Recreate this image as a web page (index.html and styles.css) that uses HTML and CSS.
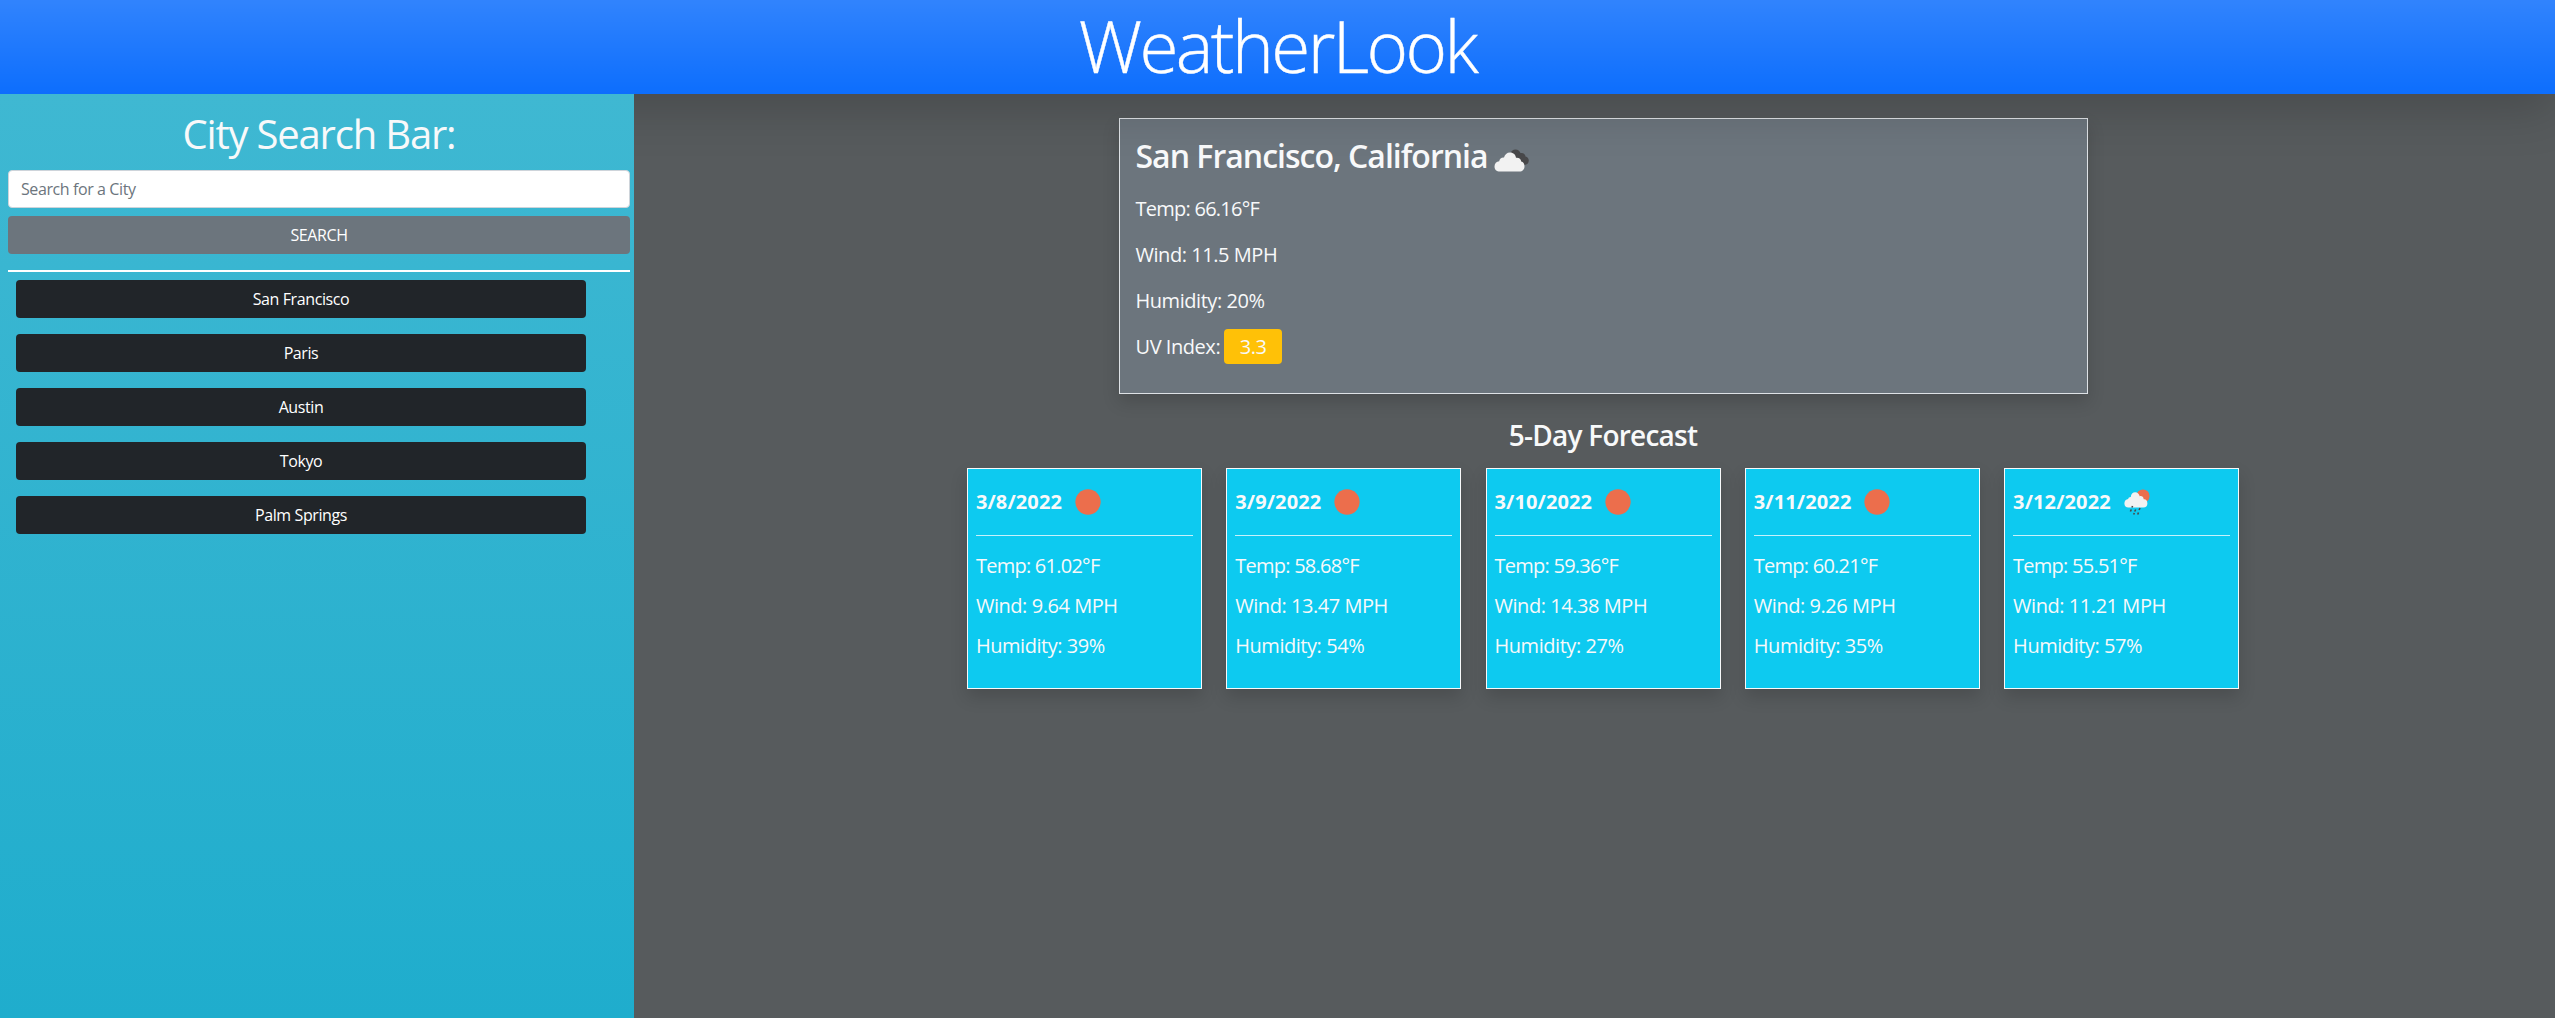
FILE: index.html
```
<!DOCTYPE html>
<html lang="en">
<head>
<meta charset="utf-8">
<title>WeatherLook</title>
<link rel="stylesheet" href="styles.css">
</head>
<body>
<svg class="defs" width="0" height="0" aria-hidden="true">
  <symbol id="sun" viewBox="0 0 26 26"><circle cx="13" cy="13" r="12.7" fill="#ec6e4c"/></symbol>
  <symbol id="clouds" viewBox="0 0 36 23">
    <path d="M16 5C17 2 19 .5 21.500 .5c2.500 0 4.300 1.500 5 3.600 3-.4 4.800 1.200 5 3.500 2.200.5 3.300 2.200 3.300 4 0 2.500-1.800 4.400-4.300 4.400H22Z" fill="#48484a"/>
    <path d="M6 22.500C2.500 22.500.5 20.500.5 17.500c0-3 2-5 4.700-5.200C5.500 10 7.500 8.200 10 8.500 10.700 5.500 13 3.500 16 3.500c3.500 0 5.700 2.300 6 5.200 3-.4 5 1.300 5.200 3.800 2 .4 3.300 2.200 3.300 4.700 0 3.200-2 5.300-5 5.300Z" fill="#f2f2f2"/>
  </symbol>
  <symbol id="rain" viewBox="0 0 26 26">
    <circle cx="19" cy="7" r="6.600" fill="#ec6e4c"/>
    <path d="M4.500 18.500C2 18.500.4 16.800.4 14.400c0-2.500 1.600-4.200 3.800-4.400.3-1.300 1.300-2 2.600-1.900C6.900 5 8.800 3.200 11.200 3.200c2.400 0 4 1.700 4.500 4 2.300-.4 3.700.8 4 3 1.900-.3 3.700.9 3.700 4.200 0 2.500-1.500 4.100-4 4.100Z" fill="#f2f2f2"/>
    <path d="m8.600 17-.7 1.500M7.300 20.500l-.9 2M11.700 20.500l-1 2M16 19l-.9 2M10.300 24l-.6 1.500M14.500 23.500l-.8 2" stroke="#48484a" stroke-width="1.600" fill="none"/>
  </symbol>
</svg>
<header class="header"><h1>WeatherLook</h1></header>
<div class="layout">
  <aside class="sidebar">
    <h2>City Search Bar:</h2>
    <input class="search-input" type="text" placeholder="Search for a City">
    <button class="btn btn-search">SEARCH</button>
    <hr class="divider">
    <div class="history">
      <button class="btn btn-city">San Francisco</button>
      <button class="btn btn-city">Paris</button>
      <button class="btn btn-city">Austin</button>
      <button class="btn btn-city">Tokyo</button>
      <button class="btn btn-city">Palm Springs</button>
    </div>
  </aside>
  <main class="main">
    <section class="current">
      <h2><span>San Francisco, California</span><svg class="icon-now"><use href="#clouds"/></svg></h2>
      <p class="temp">Temp: 66.16°F</p>
      <p>Wind: 11.5 MPH</p>
      <p>Humidity: 20%</p>
      <p class="uv">UV Index:<span class="badge">3.3</span></p>
    </section>
    <h3>5-Day Forecast</h3>
    <section class="forecast">
      <article class="day"><h4>3/8/2022<svg><use href="#sun"/></svg></h4><p class="temp">Temp: 61.02°F</p><p>Wind: 9.64 MPH</p><p>Humidity: 39%</p></article>
      <article class="day"><h4>3/9/2022<svg><use href="#sun"/></svg></h4><p class="temp">Temp: 58.68°F</p><p>Wind: 13.47 MPH</p><p>Humidity: 54%</p></article>
      <article class="day"><h4>3/10/2022<svg><use href="#sun"/></svg></h4><p class="temp">Temp: 59.36°F</p><p>Wind: 14.38 MPH</p><p>Humidity: 27%</p></article>
      <article class="day"><h4>3/11/2022<svg><use href="#sun"/></svg></h4><p class="temp">Temp: 60.21°F</p><p>Wind: 9.26 MPH</p><p>Humidity: 35%</p></article>
      <article class="day"><h4>3/12/2022<svg><use href="#rain"/></svg></h4><p class="temp">Temp: 55.51°F</p><p>Wind: 11.21 MPH</p><p>Humidity: 57%</p></article>
    </section>
  </main>
</div>
</body>
</html>
```
FILE: styles.css
```
* { box-sizing: border-box; margin: 0; }
body {
  height: 100vh;
  display: flex;
  flex-direction: column;
  overflow: hidden;
  font: 400 16px/24px "Open Sans", "Noto Sans", sans-serif;
  letter-spacing: -0.4px;
  color: #f8f9fa;
  background: #575b5d;
}
.defs { position: absolute; }
.header {
  position: relative;
  z-index: 1;
  height: 94px;
  flex: none;
  text-align: center;
  background: #0d6efd linear-gradient(180deg, rgba(255,255,255,.15), rgba(255,255,255,0));
  box-shadow: 0 16px 48px rgba(0,0,0,.175);
}
.header h1 { font-size: 71px; font-weight: 300; line-height: 92px; letter-spacing: -2.6px; color: #fff; -webkit-text-stroke: .4px #fff; }
.layout { flex: 1; display: flex; min-height: 0; }
.sidebar {
  position: relative;
  z-index: 2;
  width: 634px;
  flex: none;
  padding: 16px 4px 0 8px;
  background: linear-gradient(180deg, #3fb8d2, #1fadcd);
}
.sidebar h2 { font-size: 40px; font-weight: 400; line-height: 48px; letter-spacing: -1.2px; text-align: center; margin-bottom: 12px; }
.search-input {
  display: block;
  width: 100%;
  height: 38px;
  padding: 6px 12px;
  border: 1px solid #ced4da;
  border-radius: 4px;
  background: #fff;
  font: inherit;
  letter-spacing: inherit;
}
.search-input::placeholder { color: #6c757d; }
.btn { display: block; width: 100%; height: 38px; border: 0; border-radius: 4px; color: #fff; font: inherit; letter-spacing: inherit; }
.btn-search { margin-top: 8px; background: #6c757d; }
.divider { margin: 16px 0 8px; border: 0; height: 2px; background: #fff; }
.history { display: flex; flex-direction: column; gap: 16px; padding: 0 44px 0 8px; }
.btn-city { background: #212529; }
.main { flex: 1; display: flex; flex-direction: column; align-items: center; padding: 24px 0 0 17px; }
.current {
  width: 969px;
  height: 276px;
  padding: 13px 16px;
  border: 1px solid #dee2e6;
  background: #6c757d;
  box-shadow: 0 8px 16px rgba(0,0,0,.15);
  font-size: 20px;
}
.current h2 { display: flex; align-items: center; gap: 6px; height: 48px; margin-bottom: 6px; font-size: 32px; font-weight: 600; letter-spacing: -0.99px; }
.icon-now { width: 36px; height: 23px; margin-top: 8px; }
.current p { height: 46px; line-height: 46px; letter-spacing: -0.45px; }
.current .temp, .day .temp { letter-spacing: -0.75px; }
.current .uv { display: flex; align-items: center; gap: 4px; }
.badge { width: 58px; height: 35px; line-height: 36px; margin-bottom: 2px; border-radius: 4px; background: #ffc107; text-align: center; }
.main h3 { margin: 25px 0 16px; font-size: 28px; font-weight: 600; line-height: 33px; letter-spacing: -0.75px; }
.forecast { display: flex; gap: 24.3px; }
.day {
  width: 235px;
  height: 221px;
  padding: 8px;
  border: 1px solid #f8f9fa;
  background: #0dcaf0;
  box-shadow: 0 8px 16px rgba(0,0,0,.15);
  font-size: 20px;
}
.day h4 { display: flex; align-items: center; gap: 13px; height: 59px; padding-bottom: 9px; margin-bottom: 10px; border-bottom: 1px solid #c6f1fb; font-size: 20px; font-weight: 700; line-height: 22px; letter-spacing: .12px; }
.day h4 svg { width: 26px; height: 26px; }
.day p { height: 40px; line-height: 40px; letter-spacing: -0.45px; }
```
